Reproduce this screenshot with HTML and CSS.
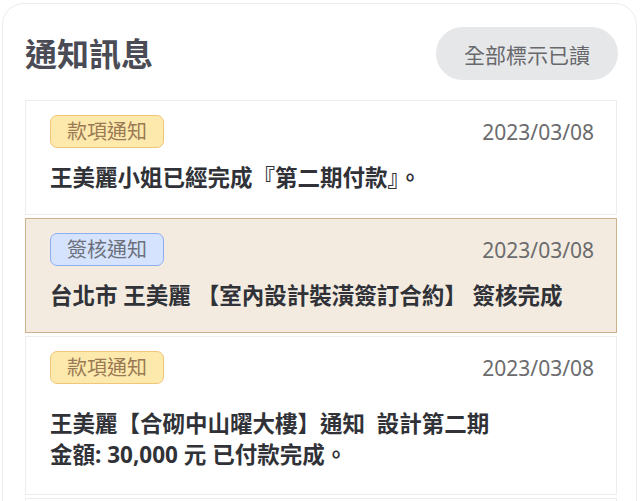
FILE: index.html
```html
<!doctype html>
<html lang="zh-Hant">
  <head>
    <meta charset="UTF-8" />
    <meta name="viewport" content="width=device-width, initial-scale=1.0" />
    <title>通知訊息</title>
    <link rel="stylesheet" href="styles.css">
  </head>
  <body>
    <div class="panel">
      <div class="panel-header">
        <h1>通知訊息</h1>
        <button class="read-all-btn">全部標示已讀</button>
      </div>
      <div class="notice-list">
        <div class="notice">
          <div class="notice-top">
            <span class="tag tag-payment">款項通知</span>
            <span class="notice-date">2023/03/08</span>
          </div>
          <p class="notice-body">王美麗小姐已經完成『第二期付款』。</p>
        </div>
        <div class="notice notice-active">
          <div class="notice-top">
            <span class="tag tag-sign">簽核通知</span>
            <span class="notice-date">2023/03/08</span>
          </div>
          <p class="notice-body">台北市 王美麗 【室內設計裝潢簽訂合約】 簽核完成</p>
        </div>
        <div class="notice notice-long">
          <div class="notice-top">
            <span class="tag tag-payment">款項通知</span>
            <span class="notice-date">2023/03/08</span>
          </div>
          <p class="notice-body">王美麗【合砌中山曜大樓】通知&nbsp; 設計第二期<br />金額: 30,000 元 已付款完成。</p>
        </div>
        <div class="notice">
          <div class="notice-top">
            <span class="tag tag-payment">款項通知</span>
            <span class="notice-date">2023/03/08</span>
          </div>
          <p class="notice-body">王美麗小姐已經完成『第一期付款』。</p>
        </div>
      </div>
    </div>
  </body>
</html>
```

FILE: styles.css
```css
* {
  margin: 0;
  padding: 0;
  box-sizing: border-box;
}

body {
  font-family: 'Noto Sans', 'Noto Sans CJK TC', sans-serif;
  background-color: #ffffff;
  color: #303238;
}

.panel {
  margin: 3px 4px 0 2px;
  padding: 23px 19px 0 22px;
  border: 1px solid #ececec;
  border-radius: 22px;
  background: #ffffff;
}

.panel-header {
  display: flex;
  align-items: center;
  justify-content: space-between;
  height: 53px;
  margin-bottom: 20px;
}

.panel-header h1 {
  font-size: 32px;
  font-weight: 700;
  color: #4a4b55;
  line-height: 1;
}

.read-all-btn {
  height: 53px;
  padding: 0 28px;
  margin-right: -1px;
  border: none;
  border-radius: 27px;
  background: #e6e7e9;
  color: #67686c;
  font-family: inherit;
  font-size: 21px;
  cursor: pointer;
}

.notice {
  padding: 14px 22px 21px 24px;
  margin-bottom: 3px;
  border: 1px solid #ededed;
  background: #ffffff;
}

.notice-active {
  background: #f3ebe0;
  border-color: #ccb38e;
}

.notice-long {
  margin-top: 2px;
  padding-bottom: 24px;
}

.notice-top {
  display: flex;
  align-items: center;
  justify-content: space-between;
}

.tag {
  display: inline-block;
  padding: 0 16px;
  border: 1px solid;
  border-radius: 7px;
  font-size: 20px;
  line-height: 31px;
}

.tag-payment {
  background: #fde9ab;
  border-color: #f1c679;
  color: #9a7a55;
}

.tag-sign {
  background: #d5e3fe;
  border-color: #8eaef3;
  color: #6c707b;
}

.notice-date {
  font-size: 21px;
  color: #6b6b6e;
}

.notice-body {
  margin-top: 15px;
  font-size: 22.5px;
  font-weight: 700;
  line-height: 30px;
  color: #303238;
}

.notice-long .notice-body {
  margin-top: 24px;
  line-height: 31px;
}
```
